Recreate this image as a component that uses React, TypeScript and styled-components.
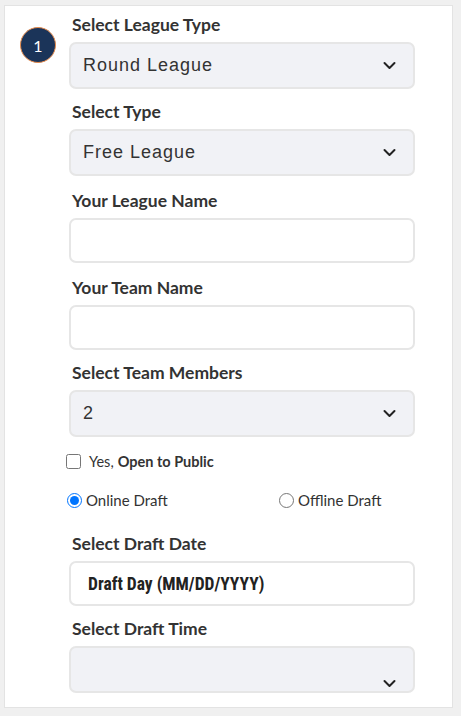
import React, { useState } from 'react';
import styled, { createGlobalStyle } from 'styled-components';

const GlobalStyle = createGlobalStyle`
  html, body {
    margin: 0;
    padding: 0;
    background: #f0f0f0;
  }
  * {
    box-sizing: border-box;
  }
`;

const Page = styled.div`
  padding: 5px 8px 10px 4px;
`;

const Card = styled.div`
  width: 449px;
  background: #fff;
  border: 1px solid #e3e3e3;
  display: flex;
  padding: 8px 0 14px 0;
`;

const StepColumn = styled.div`
  width: 64px;
  flex-shrink: 0;
  padding: 13px 0 0 15px;
`;

const StepBadge = styled.div`
  width: 36px;
  height: 36px;
  border-radius: 50%;
  background: #1b3459;
  border: 1.5px solid #e58a4c;
  color: #fff;
  display: flex;
  align-items: center;
  justify-content: center;
  font-family: Lato, 'Liberation Sans', sans-serif;
  font-size: 16px;
`;

const Form = styled.form`
  width: 346px;
  display: flex;
  flex-direction: column;
`;

const Group = styled.div<{ $gap?: number }>`
  display: flex;
  flex-direction: column;
  margin-bottom: ${p => p.$gap ?? 12}px;
`;

const Label = styled.label`
  font-family: Lato, 'Liberation Sans', sans-serif;
  font-weight: 700;
  font-size: 17.5px;
  line-height: 22px;
  color: #333;
  padding-left: 3px;
  margin-bottom: 6px;
`;

const SelectBox = styled.div`
  position: relative;
  height: 47px;
  background: #f1f2f6;
  border: 2px solid #e6e6e6;
  border-radius: 7px;
  display: flex;
  align-items: center;
  padding-left: 12px;
  font-family: 'Liberation Sans', Arial, sans-serif;
  font-size: 18px;
  letter-spacing: 1px;
  color: #333;
`;

const Chevron = styled.svg<{ $low?: boolean }>`
  position: absolute;
  right: 17px;
  top: ${p => (p.$low ? '31px' : '17px')};
  width: 13px;
  height: 9px;
`;

const TextInput = styled.input<{ $bold?: boolean }>`
  height: 45px;
  background: #fff;
  border: 2px solid #e6e6e6;
  border-radius: 7px;
  padding: 0 17px;
  font-family: ${p => (p.$bold ? "'Roboto Condensed', Roboto, 'Liberation Sans Narrow', sans-serif" : "Lato, sans-serif")};
  font-weight: ${p => (p.$bold ? 700 : 400)};
  font-size: 17.5px;
  color: #222;
  outline: none;

  &::placeholder {
    color: #222;
    opacity: 1;
  }
`;

const CheckRow = styled.label`
  display: flex;
  align-items: center;
  height: 20px;
  margin: 14px 0 19px -3px;
  font-family: Lato, 'Liberation Sans', sans-serif;
  font-size: 14.5px;
  color: #333;

  input {
    width: 15px;
    height: 15px;
    margin: 0 8px 0 0;
  }

  b {
    margin-left: 4px;
  }
`;

const RadioRow = styled.div`
  display: grid;
  grid-template-columns: 212px 1fr;
  height: 20px;
  margin: 0 0 23px -2px;
`;

const RadioLabel = styled.label`
  display: flex;
  align-items: center;
  font-family: Lato, 'Liberation Sans', sans-serif;
  font-size: 15px;
  color: #333;

  input {
    width: 15px;
    height: 15px;
    margin: 0 4px 0 0;
  }
`;

const ChevronIcon: React.FC<{ low?: boolean }> = ({ low }) => (
  <Chevron $low={low} viewBox="0 0 13 9">
    <path d="M1.5 2 L6.5 7 L11.5 2" fill="none" stroke="#222" strokeWidth="2" strokeLinecap="round" strokeLinejoin="round" />
  </Chevron>
);

const App: React.FC = () => {
  const [draft, setDraft] = useState('online');
  const [isPublic, setIsPublic] = useState(false);

  return (
    <>
      <GlobalStyle />
      <Page>
        <Card>
          <StepColumn>
            <StepBadge>1</StepBadge>
          </StepColumn>
          <Form onSubmit={e => e.preventDefault()}>
            <Group>
              <Label>Select League Type</Label>
              <SelectBox>
                Round League
                <ChevronIcon />
              </SelectBox>
            </Group>
            <Group $gap={14}>
              <Label>Select Type</Label>
              <SelectBox>
                Free League
                <ChevronIcon />
              </SelectBox>
            </Group>
            <Group $gap={14}>
              <Label>Your League Name</Label>
              <TextInput type="text" />
            </Group>
            <Group>
              <Label>Your Team Name</Label>
              <TextInput type="text" />
            </Group>
            <Group $gap={0}>
              <Label>Select Team Members</Label>
              <SelectBox>
                2
                <ChevronIcon />
              </SelectBox>
            </Group>
            <CheckRow>
              <input type="checkbox" checked={isPublic} onChange={e => setIsPublic(e.target.checked)} />
              Yes,<b>Open to Public</b>
            </CheckRow>
            <RadioRow>
              <RadioLabel>
                <input type="radio" name="draft" checked={draft === 'online'} onChange={() => setDraft('online')} />
                Online Draft
              </RadioLabel>
              <RadioLabel>
                <input type="radio" name="draft" checked={draft === 'offline'} onChange={() => setDraft('offline')} />
                Offline Draft
              </RadioLabel>
            </RadioRow>
            <Group>
              <Label>Select Draft Date</Label>
              <TextInput type="text" $bold placeholder="Draft Day (MM/DD/YYYY)" />
            </Group>
            <Group $gap={0}>
              <Label>Select Draft Time</Label>
              <SelectBox>
                <ChevronIcon low />
              </SelectBox>
            </Group>
          </Form>
        </Card>
      </Page>
    </>
  );
};

export default App;
